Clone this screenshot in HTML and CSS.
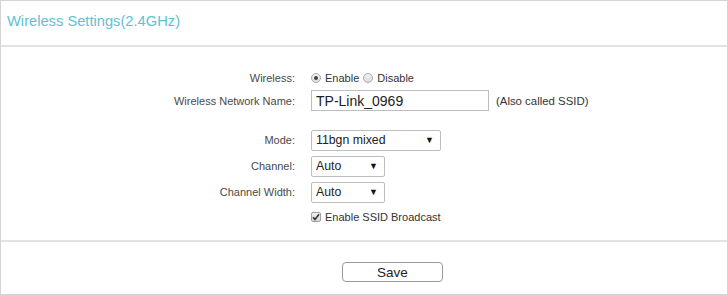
FILE: index.html
```html
<!DOCTYPE html>
<html>
<head>
<meta charset="utf-8">
<link rel="stylesheet" href="styles.css">
</head>
<body>
<div class="panel">
  <div class="header"><h1 class="title">Wireless Settings(2.4GHz)</h1></div>
  <div class="form">
    <div class="row">
      <div class="label">Wireless:</div>
      <div class="ctrl">
        <span class="radio checked"></span><span class="opt">Enable</span>
        <span class="radio"></span><span class="opt">Disable</span>
      </div>
    </div>
    <div class="row">
      <div class="label">Wireless Network Name:</div>
      <div class="ctrl">
        <input class="text" type="text" value="TP-Link_0969">
        <span class="hint">(Also called SSID)</span>
      </div>
    </div>
    <div class="row sel first-sel">
      <div class="label">Mode:</div>
      <div class="ctrl">
        <div class="select wide"><span class="val">11bgn mixed</span><span class="arrow">▼</span></div>
      </div>
    </div>
    <div class="row sel">
      <div class="label">Channel:</div>
      <div class="ctrl">
        <div class="select"><span class="val">Auto</span><span class="arrow">▼</span></div>
      </div>
    </div>
    <div class="row sel">
      <div class="label">Channel Width:</div>
      <div class="ctrl">
        <div class="select"><span class="val">Auto</span><span class="arrow">▼</span></div>
      </div>
    </div>
    <div class="row">
      <div class="label"></div>
      <div class="ctrl">
        <span class="check"><svg width="8" height="8" viewBox="0 0 8 8"><path d="M1 4.2 L3 6.4 L7 1.2" fill="none" stroke="#333" stroke-width="1.6"/></svg></span><span class="opt">Enable SSID Broadcast</span>
      </div>
    </div>
  </div>
  <div class="footer">
    <button class="save" type="button">Save</button>
  </div>
</div>
</body>
</html>
```
FILE: styles.css
```css
html, body { margin: 0; padding: 0; background: #fff; }
body { font-family: Arial, "Liberation Sans", sans-serif; color: #333; }
.panel {
  width: 728px; height: 295px; box-sizing: border-box;
  border: 1px solid #d4d4d4;
  display: flex; flex-direction: column;
}
.header {
  height: 46px; box-sizing: border-box; flex: none;
  border-bottom: 2px solid #e2e2e2;
  padding: 10px 0 0 6px;
}
.title {
  margin: 0; font-weight: normal; font-size: 14.7px; line-height: 20px;
  color: #62bfd4;
}
.form {
  padding-top: 19px; height: 195px; box-sizing: border-box; flex: none;
  border-bottom: 2px solid #e2e2e2;
}
.row { display: flex; align-items: center; height: 23px; }
.row.sel { height: 26px; }
.row.first-sel { margin-top: 15px; }
.label {
  width: 294px; text-align: right; font-size: 11px; color: #4a4a4a; flex: none;
}
.ctrl { padding-left: 16px; display: flex; align-items: center; font-size: 11px; color: #333; }
.opt { margin-left: 4px; margin-right: 4px; }
.radio {
  width: 10px; height: 10px; box-sizing: border-box; border-radius: 50%;
  border: 1px solid #a8a8a8; background: linear-gradient(#f4f4f4, #dcdcdc);
  display: inline-block; position: relative;
}
.radio.checked::after {
  content: ""; position: absolute; left: 2px; top: 2px; width: 4px; height: 4px;
  border-radius: 50%; background: #444;
}
.check {
  width: 10px; height: 10px; box-sizing: border-box; border: 1px solid #a0a0a0;
  border-radius: 2px; background: linear-gradient(#f4f4f4, #d8d8d8);
  display: inline-flex; align-items: center; justify-content: center;
}
.text {
  width: 178px; height: 21px; box-sizing: border-box; border: 1px solid #bdbdbd;
  font-family: Arial, "Liberation Sans", sans-serif; font-size: 14px; color: #222;
  padding: 0 4px; outline: none;
}
.hint { margin-left: 7px; font-size: 11.4px; }
.select {
  width: 74px; height: 21px; box-sizing: border-box; border: 1px solid #bdbdbd; border-radius: 2px;
  display: flex; align-items: center; justify-content: space-between; padding: 0 6px 0 4px;
  font-size: 12.3px; color: #222; background: #fff;
}
.select.wide { width: 130px; }
.arrow { font-size: 9px; color: #111; }
.footer { flex: 1; display: flex; align-items: flex-start; padding-top: 20px; padding-left: 341px; }
.save {
  width: 101px; height: 20px; box-sizing: border-box; border: 1px solid #9a9a9a; border-radius: 4px;
  background: #fff; font-family: Arial, "Liberation Sans", sans-serif; font-size: 13.5px; color: #222;
  padding: 0;
}
```
